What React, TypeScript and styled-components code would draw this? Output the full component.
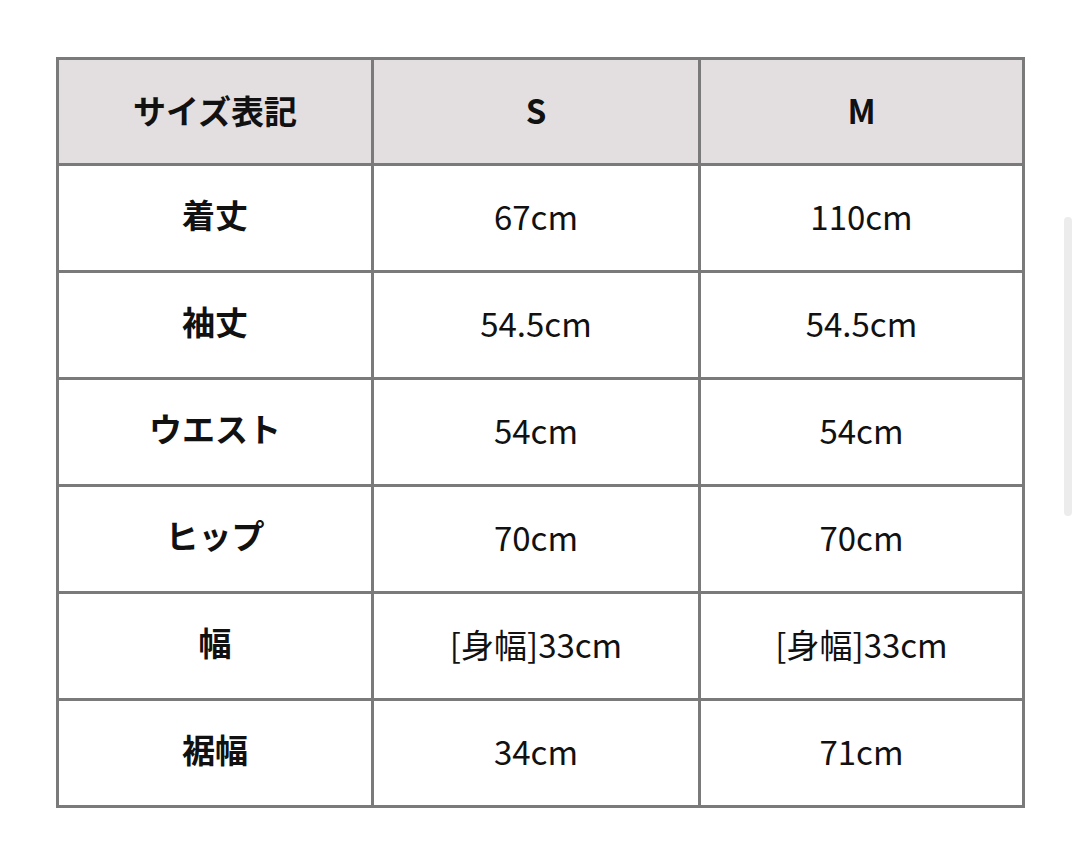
import React from "react";
import styled, { createGlobalStyle } from "styled-components";

type Row = { label: string; s: string; m: string };

const rows: Row[] = [
  { label: "着丈", s: "67cm", m: "110cm" },
  { label: "袖丈", s: "54.5cm", m: "54.5cm" },
  { label: "ウエスト", s: "54cm", m: "54cm" },
  { label: "ヒップ", s: "70cm", m: "70cm" },
  { label: "幅", s: "[身幅]33cm", m: "[身幅]33cm" },
  { label: "裾幅", s: "34cm", m: "71cm" },
];

export default function App() {
  return (
    <>
      <GlobalStyle />
      <Page>
        <SizeTable>
          <colgroup>
            <col style={{ width: 315 }} />
            <col style={{ width: 327 }} />
            <col style={{ width: 324 }} />
          </colgroup>
          <thead>
            <tr>
              <HeadCell>サイズ表記</HeadCell>
              <HeadCell>S</HeadCell>
              <HeadCell>M</HeadCell>
            </tr>
          </thead>
          <tbody>
            {rows.map((r) => (
              <tr key={r.label}>
                <LabelCell>{r.label}</LabelCell>
                <ValueCell>{r.s}</ValueCell>
                <ValueCell>{r.m}</ValueCell>
              </tr>
            ))}
          </tbody>
        </SizeTable>
        <ScrollThumb />
      </Page>
    </>
  );
}

//Styled Components

const GlobalStyle = createGlobalStyle`
  body {
    margin: 0;
    background: #fff;
    font-family: "Noto Sans CJK JP", "Noto Sans", sans-serif;
    color: #111;
  }
`;

const Page = styled.div`
  position: relative;
  width: 1080px;
  height: 853px;
  box-sizing: border-box;
  padding: 57px 0 0 56px;
`;

const SizeTable = styled.table`
  border-collapse: collapse;
  table-layout: fixed;
  width: 966px;
  border: 3px solid #7a7a7a;
`;

const Cell = styled.td`
  border: 3px solid #7a7a7a;
  height: 96px;
  padding: 0 0 8px;
  text-align: center;
  vertical-align: middle;
  line-height: 1;
`;

const HeadCell = styled(Cell).attrs({ as: "th" })`
  height: 101px;
  padding: 0 0 2px;
  background: #e3dfe0;
  font-size: 33px;
  font-weight: 700;
`;

const LabelCell = styled(Cell)`
  font-size: 33px;
  font-weight: 700;
`;

const ValueCell = styled(Cell)`
  padding: 2px 0 6px;
  font-size: 33px;
  font-weight: 400;
`;

const ScrollThumb = styled.div`
  position: absolute;
  right: 8px;
  top: 217px;
  width: 8px;
  height: 299px;
  border-radius: 4px;
  background: #ececec;
`;
